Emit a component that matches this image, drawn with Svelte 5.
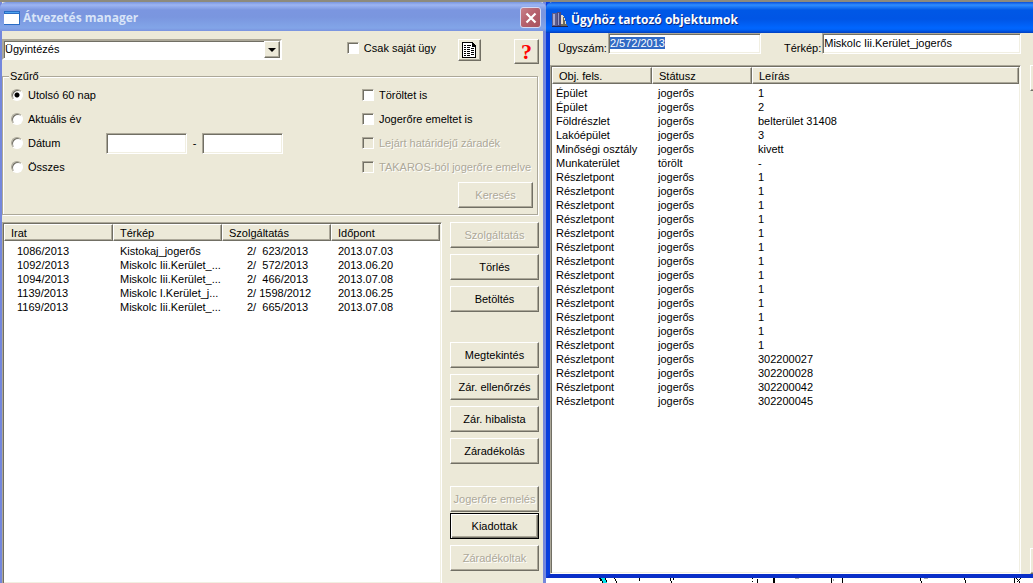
<script lang="ts">
	import { onMount } from 'svelte';

	type CaseRow = { irat: string; terkep: string; szolg: string; date: string };
	type ObjectRow = { kind: string; status: string; desc: string };
	type SideButton = { label: string; disabled?: boolean; isDefault?: boolean };

	const cases: CaseRow[] = [
		{ irat: '1086/2013', terkep: 'Kistokaj_jogerős', szolg: '2/  623/2013', date: '2013.07.03' },
		{ irat: '1092/2013', terkep: 'Miskolc Iii.Kerület_...', szolg: '2/  572/2013', date: '2013.06.20' },
		{ irat: '1094/2013', terkep: 'Miskolc Iii.Kerület_...', szolg: '2/  466/2013', date: '2013.07.08' },
		{ irat: '1139/2013', terkep: 'Miskolc I.Kerület_j...', szolg: '2/ 1598/2012', date: '2013.06.25' },
		{ irat: '1169/2013', terkep: 'Miskolc Iii.Kerület_...', szolg: '2/  665/2013', date: '2013.07.08' },
	];

	const points = [...Array(13).fill('1'), '302200027', '302200028', '302200042', '302200045'];

	const objects: ObjectRow[] = [
		{ kind: 'Épület', status: 'jogerős', desc: '1' },
		{ kind: 'Épület', status: 'jogerős', desc: '2' },
		{ kind: 'Földrészlet', status: 'jogerős', desc: 'belterület 31408' },
		{ kind: 'Lakóépület', status: 'jogerős', desc: '3' },
		{ kind: 'Minőségi osztály', status: 'jogerős', desc: 'kivett' },
		{ kind: 'Munkaterület', status: 'törölt', desc: '-' },
		...points.map((desc) => ({ kind: 'Részletpont', status: 'jogerős', desc })),
	];

	const buttonGroups: SideButton[][] = [
		[{ label: 'Szolgáltatás', disabled: true }, { label: 'Törlés' }, { label: 'Betöltés' }],
		[
			{ label: 'Megtekintés' },
			{ label: 'Zár. ellenőrzés' },
			{ label: 'Zár. hibalista' },
			{ label: 'Záradékolás' },
		],
		[
			{ label: 'Jogerőre emelés', disabled: true },
			{ label: 'Kiadottak', isDefault: true },
			{ label: 'Záradékoltak', disabled: true },
		],
	];

	const checks = [
		{ label: 'Töröltet is', disabled: false },
		{ label: 'Jogerőre emeltet is', disabled: false },
		{ label: 'Lejárt határidejű záradék', disabled: true },
		{ label: 'TAKAROS-ból jogerőre emelve', disabled: true },
	];

	let period = $state('last60');
	let caseNumber = $state('2/572/2013');
	let mapName = $state('Miskolc Iii.Kerület_jogerős');
	let caseInput: HTMLInputElement;

	onMount(() => {
		caseInput.focus();
		caseInput.select();
	});
</script>

<div class="desktop">
	<section class="window manager">
		<header class="titlebar inactive">
			<svg class="title-icon" width="16" height="14" viewBox="0 0 16 14" shape-rendering="crispEdges">
				<rect width="16" height="14" fill="#2a6cc4" />
				<rect x="1" y="1" width="14" height="1" fill="#4fa3ee" />
				<rect x="0" y="3" width="15" height="10" fill="#fff" />
			</svg>
			<h1>Átvezetés manager</h1>
			<button class="close" aria-label="Bezárás">
				<svg width="12" height="12" viewBox="0 0 12 12">
					<path d="M1.5 1.5 10.5 10.5M10.5 1.5 1.5 10.5" stroke="#fff" stroke-width="2.2" />
				</svg>
			</button>
		</header>

		<div class="toolbar">
			<div class="combo">
				<select aria-label="Nézet">
					<option>Ügyintézés</option>
				</select>
				<span class="combo-arrow"></span>
			</div>
			<div class="tools">
				<label class="option own"><input type="checkbox" />Csak saját ügy</label>
				<button class="btn list-btn" aria-label="Lista">
					<svg width="15" height="16" viewBox="0 0 15 16" shape-rendering="crispEdges">
						<path d="M1 1h10v1h1v1h1v1h1v11H1z" fill="#fff" />
						<path
							d="M0 0h11v1h1v1h1v1h1v13H0zM1 1v14h12V5h-3V1z"
							fill="#000"
							fill-rule="evenodd"
						/>
						<path
							d="M2 3h2v1H2zM5 3h4v1H5zM2 5h2v1H2zM5 5h3v1H5zM9 6h3v1H9zM2 7h2v1H2zM5 7h3v1H5zM9 8h3v1H9zM2 9h2v1H2zM5 9h3v1H5zM9 10h3v1H9zM2 11h2v1H2zM5 11h3v1H5zM9 12h3v1H9zM2 13h2v1H2zM5 13h3v1H5z"
							fill="#000"
						/>
					</svg>
				</button>
				<button class="btn help-btn" aria-label="Súgó">?</button>
			</div>
		</div>

		<fieldset>
			<legend>Szűrő</legend>
			<div class="filter">
				<div class="periods">
					<label class="option"><input type="radio" bind:group={period} value="last60" />Utolsó 60 nap</label>
					<label class="option"><input type="radio" bind:group={period} value="year" />Aktuális év</label>
					<div class="date-row">
						<label class="option"><input type="radio" bind:group={period} value="date" />Dátum</label>
						<input class="field date" type="text" aria-label="Dátum kezdete" />
						<span class="dash">-</span>
						<input class="field date" type="text" aria-label="Dátum vége" />
					</div>
					<label class="option"><input type="radio" bind:group={period} value="all" />Összes</label>
				</div>
				<div class="checks">
					{#each checks as check (check.label)}
						<label class="option" class:disabled={check.disabled}>
							<input type="checkbox" disabled={check.disabled} />{check.label}
						</label>
					{/each}
					<button class="btn search" disabled>Keresés</button>
				</div>
			</div>
		</fieldset>

		<div class="work">
			<div class="listview">
				<table class="cases">
					<thead>
						<tr><th>Irat</th><th>Térkép</th><th>Szolgáltatás</th><th>Időpont</th></tr>
					</thead>
					<tbody>
						{#each cases as row (row.irat)}
							<tr>
								<td class="irat">{row.irat}</td>
								<td>{row.terkep}</td>
								<td class="szolg">{row.szolg}</td>
								<td>{row.date}</td>
							</tr>
						{/each}
					</tbody>
				</table>
			</div>
			<div class="side">
				{#each buttonGroups as group, i (i)}
					<div class="group">
						{#each group as b (b.label)}
							<button class="btn" class:default={b.isDefault} disabled={b.disabled}>{b.label}</button>
						{/each}
					</div>
				{/each}
			</div>
		</div>
	</section>

	<div class="right">
		<section class="window objects">
			<header class="titlebar active">
				<svg class="title-icon" width="16" height="16" viewBox="0 0 16 16" shape-rendering="crispEdges">
					<path d="M0 1h5v13H0z" fill="#5c5c8c" />
					<path d="M1 2h2v11H1z" fill="#a9a9cc" />
					<path d="M5 0h4v14H5z" fill="#4a4a80" />
					<path d="M6 1h1v12H6z" fill="#9a9ac4" />
					<path d="M9 3h2v1h1v2h1v3h1v3h1v2H9z" fill="#e4dcc8" />
					<path d="M11 5h1v3h1v4h-2zM9 12h6v2H9z" fill="#6d6a5c" />
					<path d="M0 14h16v1H0z" fill="#23234c" />
				</svg>
				<h1>Ügyhöz tartozó objektumok</h1>
			</header>

			<div class="client">
				<div class="main">
					<div class="fields">
						<label for="case-number">Ügyszám:</label>
						<input id="case-number" class="field" type="text" bind:value={caseNumber} bind:this={caseInput} />
						<label class="map-label" for="map-name">Térkép:</label>
						<input id="map-name" class="field map" type="text" bind:value={mapName} />
					</div>
					<div class="listview">
						<table class="object-table">
							<thead>
								<tr><th>Obj. fels.</th><th>Státusz</th><th>Leírás</th></tr>
							</thead>
							<tbody>
								{#each objects as row, i (i)}
									<tr><td>{row.kind}</td><td>{row.status}</td><td>{row.desc}</td></tr>
								{/each}
							</tbody>
						</table>
					</div>
				</div>
				<div class="edge">
					<button class="btn" aria-label="Művelet"></button>
					<button class="btn" aria-label="Kilépés"></button>
				</div>
			</div>
		</section>

		<!-- strip of the map window showing below the dialog -->
		<svg class="map-strip" width="487" height="5" viewBox="0 0 487 5" shape-rendering="crispEdges">
			<path d="M54 0h5v1h1v2h1v2h-4V3h-2V1h-1z" fill="#00e5ee" />
			<path
				d="M53 0h2v1h1v2h1v2h-1V3h-2V1h-1zM59 0h1v2h1v2h-1V2h-1zM68 0h1v1h1v2h1v2h1-2V3h-1V1h-1zM93 0h1v3h-1zM124 0h1v3h1v2h-1V3h-1zM127 0h1v2h-1zM206 0h1v1h-1zM206 3h1v1h-1zM211 1h1v4h-1zM227 0h2v5h-2zM285 0h1v5h-1zM296 0h1v5h-1zM374 0h1v3h1v2h-1V3h-1zM418 0h1v2h1v3h-1V2h-1zM468 0h1v5h-1zM470 0h1v1h1v1h1V1h1V0h1v1h-1v1h-1v1h1v2h-1V3h-1v1h-1V3h1V2h-1V1h-1z"
				fill="#000"
			/>
			<path d="M249 0h4v1h-4zM378 0h4v1h-4zM287 1h1v2h-1z" fill="#aaa" />
		</svg>
	</div>
</div>

<style>
	:global(body) {
		margin: 0;
		background: #fff;
	}

	.desktop {
		--face: #ece9d8;
		--shadow: #aca899;
		--dark: #716f64;
		box-sizing: border-box;
		display: flex;
		height: 100vh;
		overflow: hidden;
		border-top: 2px solid #8d8a7d;
		font-family: 'Liberation Sans', Arial, sans-serif;
		font-size: 11px;
		line-height: 14px;
		color: #000;
	}

	button,
	input,
	select {
		font: inherit;
		color: inherit;
	}

	.window {
		box-sizing: border-box;
		display: flex;
		flex-direction: column;
		background: var(--face);
	}

	.manager {
		flex: 541;
		min-width: 0;
		border: solid #7487dc;
		border-width: 0 3px 0 2px;
	}

	.right {
		flex: 487;
		min-width: 0;
		display: flex;
		flex-direction: column;
		background: #fff;
	}

	.objects {
		flex: 1;
		min-height: 0;
		border-left: 4px solid #0a3fdc;
		border-bottom: 4px solid #0a2fc8;
		background: var(--face);
	}

	.titlebar {
		display: flex;
		align-items: center;
		gap: 3px;
		flex: none;
	}

	.titlebar h1 {
		flex: 1;
		margin: 0;
		font-family: 'Open Sans', 'Noto Sans', sans-serif;
		font-size: 12px;
		line-height: 18px;
		font-weight: 700;
		white-space: nowrap;
	}

	.inactive {
		height: 29px;
		margin: 0 -3px 0 -2px;
		padding: 2px 5px 0 4px;
		box-sizing: border-box;
		border-radius: 6px 6px 0 0;
		background: linear-gradient(#7a96df 0, #9db5f2 3px, #7b96e0 8px, #7a96df 15px, #82a5e8 26px, #7a93df 100%);
		color: #d8e4f8;
	}

	.active {
		height: 31px;
		margin-left: -4px;
		padding: 5px 6px 0;
		box-sizing: border-box;
		border-radius: 6px 0 0 0;
		background: linear-gradient(#0a4fd8 0, #2f8dff 3px, #0058e6 8px, #0055e5 17px, #0066ff 26px, #0060f4 28px, #003ec0 100%);
		color: #fff;
		text-shadow: 1px 1px 0 #0a2a80;
	}

	.close {
		display: grid;
		place-items: center;
		width: 21px;
		height: 21px;
		padding: 0;
		border: 1px solid #d5daf3;
		border-radius: 3px;
		background: linear-gradient(135deg, #c88088, #b5606c 50%, #a8525e);
	}

	.toolbar {
		display: flex;
		align-items: flex-start;
		justify-content: space-between;
		padding: 8px 4px 6px 0;
	}

	.combo {
		position: relative;
		flex: 0 1 280px;
	}

	.combo select {
		appearance: none;
		box-sizing: border-box;
		width: 100%;
		height: 21px;
		padding: 0 18px 1px 1px;
		border: 2px solid;
		border-color: var(--shadow) #fff #fff var(--shadow);
		border-radius: 0;
		background: #fff;
		box-shadow: inset 1px 1px 0 var(--dark);
		outline: none;
	}

	.combo-arrow {
		position: absolute;
		top: 2px;
		right: 2px;
		box-sizing: border-box;
		width: 16px;
		height: 17px;
		border: 1px solid;
		border-color: #fff var(--dark) var(--dark) #fff;
		background: var(--face);
		box-shadow: inset -1px -1px 0 var(--shadow);
		pointer-events: none;
	}

	.combo-arrow::after {
		content: '';
		position: absolute;
		top: 6px;
		left: 3px;
		border: 4px solid transparent;
		border-top-color: #000;
		border-bottom: 0;
	}

	.tools {
		display: flex;
		align-items: flex-start;
	}

	.own {
		margin-right: 22px;
	}

	.option {
		display: flex;
		align-items: center;
		gap: 5px;
		white-space: nowrap;
	}

	.tools .option {
		height: 17px;
	}

	.option input {
		appearance: none;
		flex: none;
		box-sizing: border-box;
		width: 12px;
		height: 12px;
		margin: 0;
		background: #fff;
		border: 1px solid;
		border-color: var(--shadow) #fff #fff var(--shadow);
		box-shadow: inset 1px 1px 0 var(--dark);
	}

	.option input[type='radio'] {
		border-radius: 50%;
	}

	.option input[type='radio']:checked {
		background: radial-gradient(circle, #000 0 2px, #fff 3px);
	}

	.option input:disabled {
		background: var(--face);
	}

	.disabled,
	.btn:disabled {
		color: var(--shadow);
		text-shadow: 1px 1px 0 #fff;
	}

	.btn {
		box-sizing: border-box;
		height: 26px;
		padding: 0;
		border: 1px solid;
		border-color: #fff var(--dark) var(--dark) #fff;
		border-radius: 0;
		background: var(--face);
		box-shadow: inset -1px -1px 0 var(--shadow);
		white-space: nowrap;
	}

	.list-btn {
		display: grid;
		place-items: center;
		width: 23px;
		height: 22px;
		margin-right: 33px;
	}

	.help-btn {
		width: 25px;
		height: 25px;
		font-family: 'Liberation Serif', serif;
		font-size: 22px;
		line-height: 22px;
		font-weight: 700;
		color: #f00;
	}

	fieldset {
		min-width: 0;
		margin: 0 5px 0 0;
		padding: 0 4px 6px 8px;
		border: 1px solid var(--shadow);
		box-shadow: inset 1px 1px 0 #fff, 1px 1px 0 #fff;
	}

	legend {
		margin-left: -2px;
		padding: 0 1px;
		line-height: 13px;
		background: var(--face);
	}

	.filter {
		display: flex;
		justify-content: space-between;
	}

	.periods .option,
	.checks .option {
		height: 24px;
	}

	.checks {
		display: flex;
		flex-direction: column;
		width: 171px;
	}

	.search {
		align-self: flex-end;
		width: 75px;
		margin-top: 3px;
	}

	.date-row {
		display: flex;
		align-items: center;
		height: 24px;
	}

	.date-row .option {
		width: 95px;
	}

	.field {
		box-sizing: border-box;
		height: 21px;
		padding: 0 1px 2px;
		border: 1px solid;
		border-color: var(--shadow) #fff #fff var(--shadow);
		background: #fff;
		box-shadow: inset 1px 1px 0 var(--dark), inset -1px -1px 0 #f1efe2;
		outline: none;
	}

	.field::selection {
		background: #316ac5;
		color: #fff;
	}

	.date {
		width: 81px;
	}

	.dash {
		width: 15px;
		text-align: center;
	}

	.work {
		flex: 1;
		min-height: 0;
		display: flex;
		gap: 8px;
		padding: 7px 4px 0 0;
	}

	.listview {
		flex: 1;
		min-width: 0;
		box-sizing: border-box;
		border: 1px solid;
		border-color: var(--shadow) #fff #fff var(--shadow);
		background: #fff;
		box-shadow: inset 1px 1px 0 var(--dark), inset -1px -1px 0 #f1efe2;
		padding: 1px;
		overflow: hidden;
	}

	.work .listview {
		border-bottom: 0;
	}

	table {
		width: 100%;
		table-layout: fixed;
		border-collapse: separate;
		border-spacing: 0;
	}

	th {
		box-sizing: border-box;
		height: 17px;
		padding: 0 6px;
		border: 1px solid;
		border-color: #fff var(--dark) var(--dark) #fff;
		background: var(--face);
		box-shadow: inset -1px -1px 0 var(--shadow);
		font-weight: 400;
		line-height: 14px;
		text-align: left;
	}

	tbody::before {
		content: '';
		display: block;
		height: 2px;
	}

	.cases tbody::before {
		height: 3px;
	}

	td {
		height: 14px;
		padding: 0 0 0 7px;
		line-height: 14px;
		white-space: pre;
		overflow: hidden;
	}

	.irat {
		padding-left: 13px;
	}

	.szolg {
		padding-left: 25px;
	}

	.side {
		flex: 0 0 89px;
		display: flex;
		flex-direction: column;
		gap: 30px;
	}

	.group {
		display: flex;
		flex-direction: column;
		gap: 6px;
	}

	.group:last-child {
		margin-top: -8px;
	}

	.side .default {
		margin-top: -5px;
		border-color: #000;
		box-shadow: inset 1px 1px 0 #fff, inset -1px -1px 0 var(--dark), inset -2px -2px 0 var(--shadow);
	}

	.client {
		flex: 1;
		min-height: 0;
		display: flex;
		gap: 9px;
	}

	.main {
		flex: 1;
		min-width: 0;
		display: flex;
		flex-direction: column;
		gap: 10px;
	}

	.fields {
		display: flex;
		align-items: flex-start;
		gap: 1px;
		padding-left: 8px;
	}

	.fields label {
		padding-top: 8px;
		white-space: nowrap;
	}

	.fields .field {
		flex: 153;
		min-width: 0;
	}

	.fields .map {
		flex: 200;
	}

	.map-label {
		margin-left: 22px;
	}

	.object-table th:nth-child(-n + 2) {
		width: 100px;
	}

	.object-table td {
		padding-left: 6px;
	}

	.object-table td:first-child {
		padding-left: 4px;
	}

	.edge {
		flex: 0 0 3px;
		display: flex;
		flex-direction: column;
		justify-content: space-between;
		padding-top: 32px;
		overflow: hidden;
	}

	.edge .btn {
		width: 75px;
	}

	.map-strip {
		display: block;
		flex: none;
	}
</style>
